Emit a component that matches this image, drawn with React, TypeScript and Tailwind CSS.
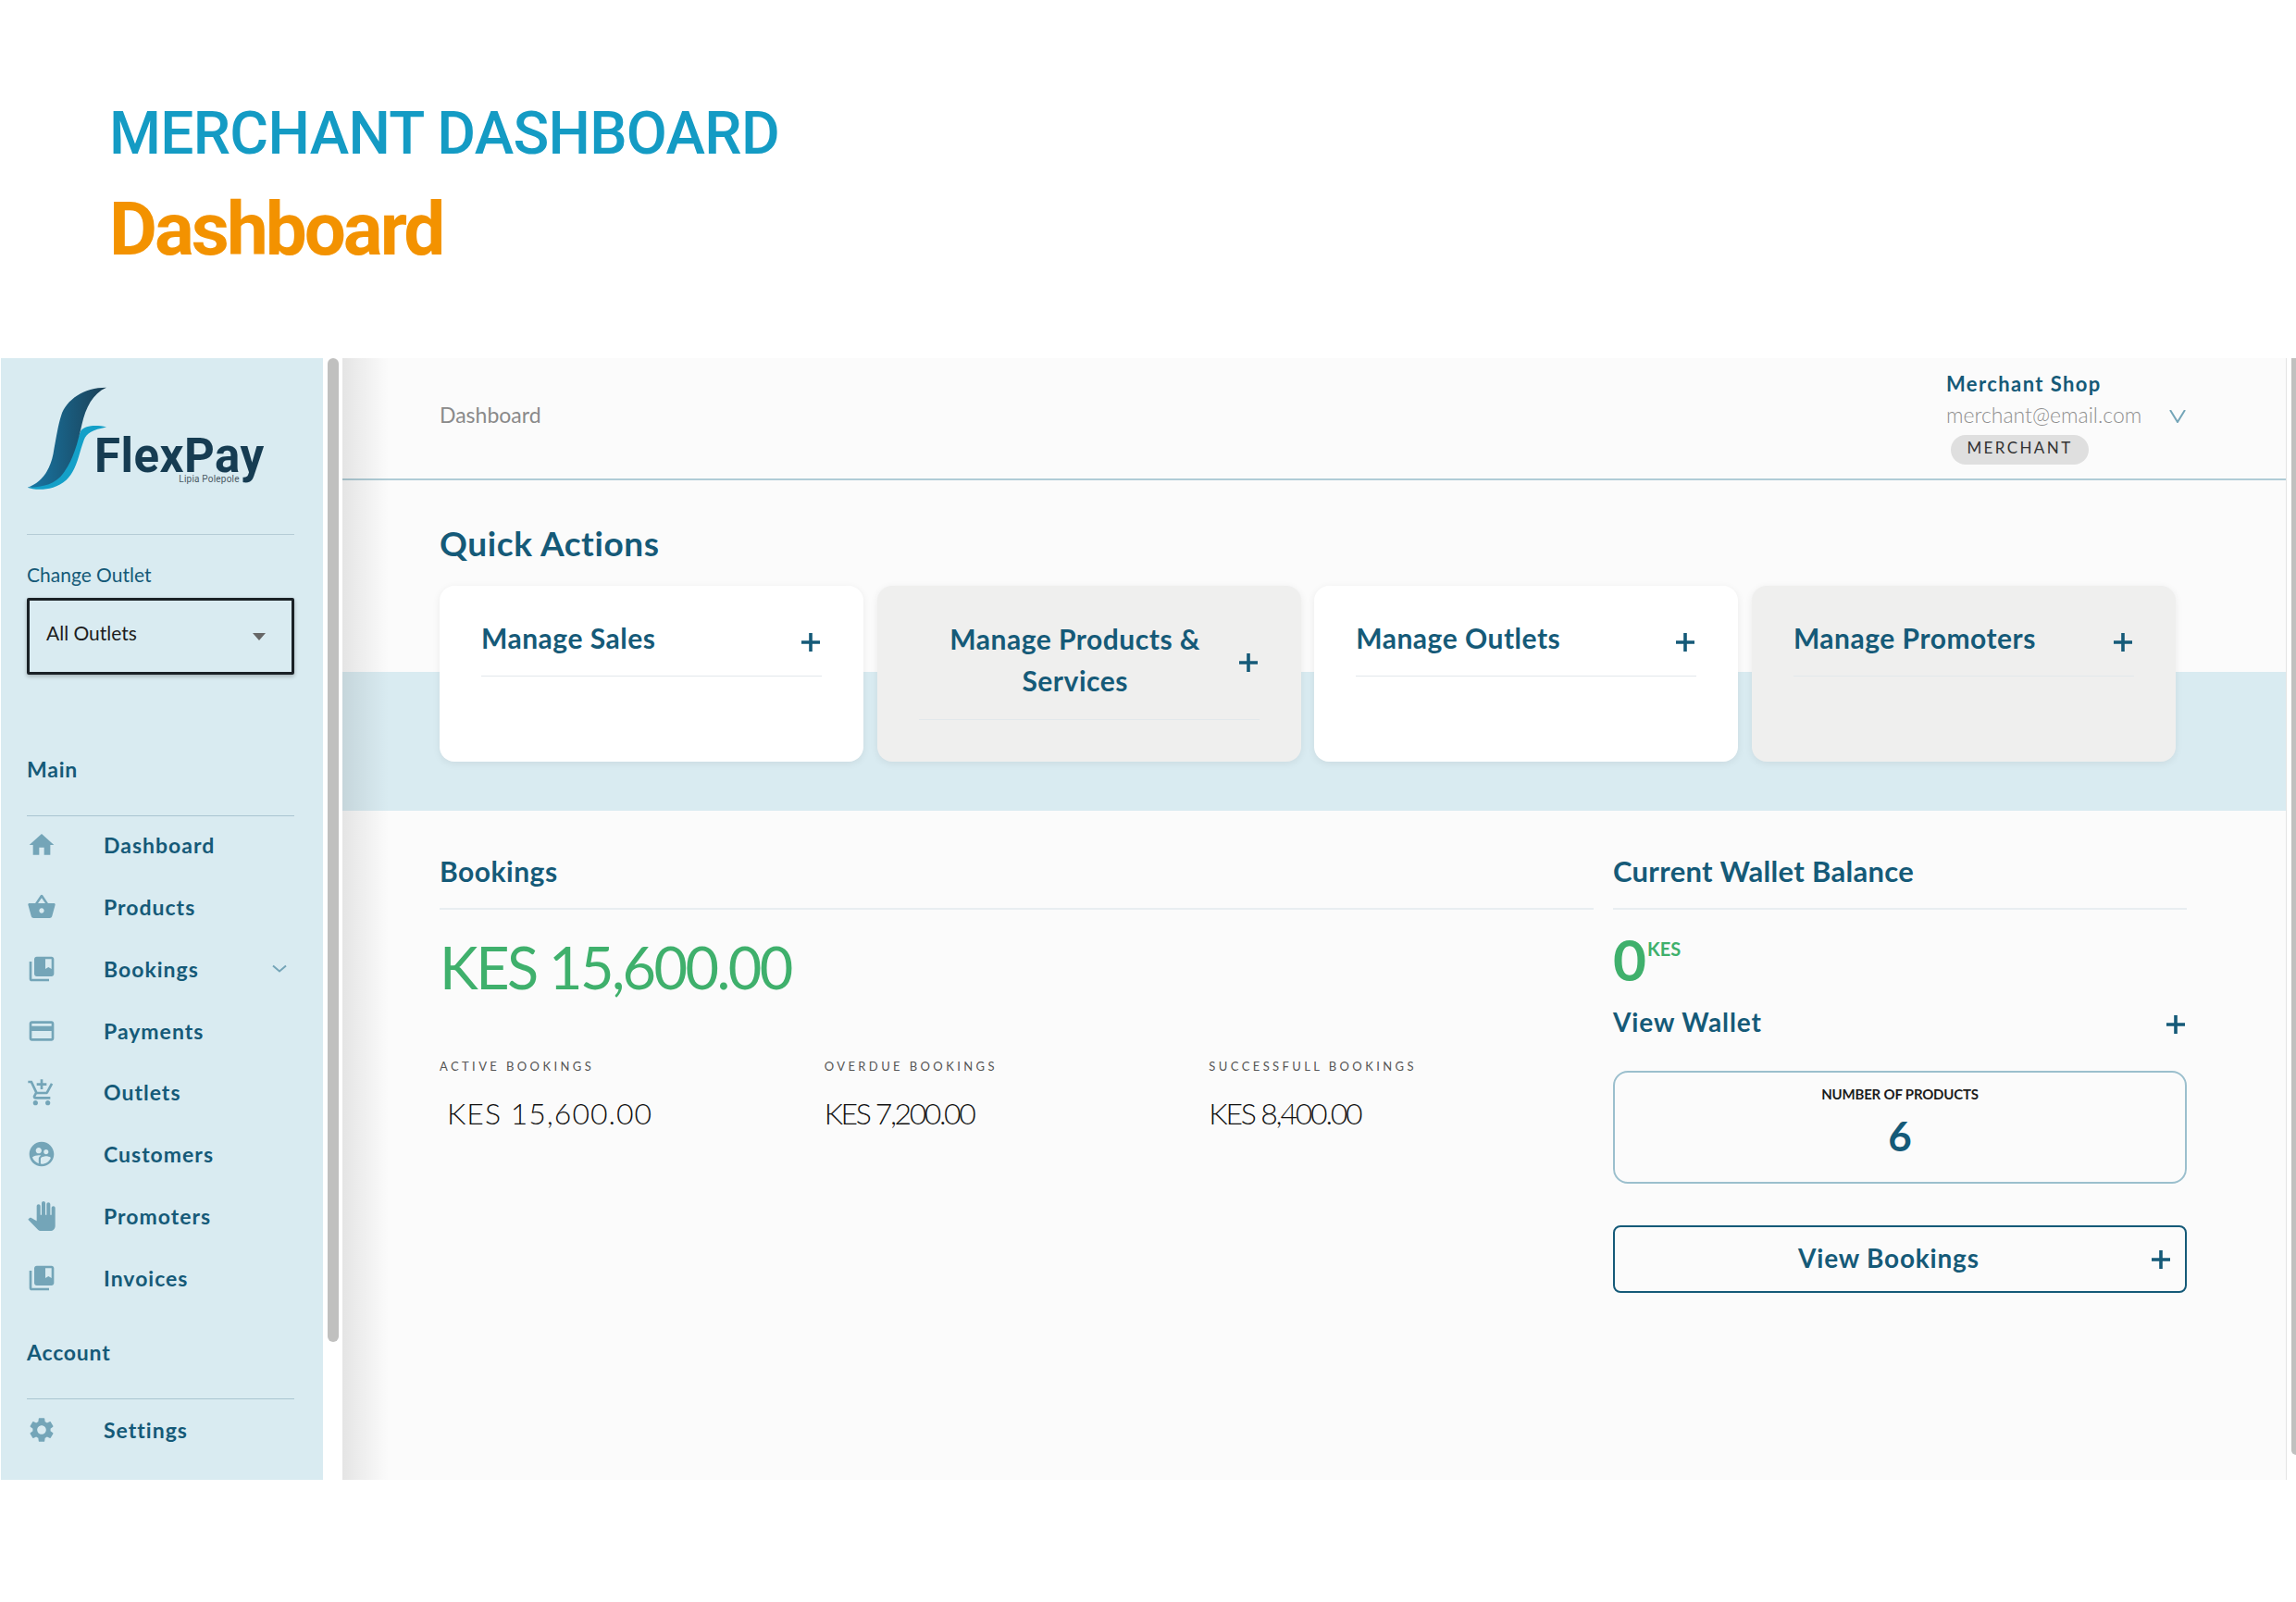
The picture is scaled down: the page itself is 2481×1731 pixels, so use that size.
const P: Record<string, string> = {
  home: "M10 20v-6h4v6h5v-8h3L12 3 2 12h3v8z",
  basket: "M17.21 9l-4.38-6.56c-.19-.28-.51-.42-.83-.42-.32 0-.64.14-.83.43L6.79 9H2c-.55 0-1 .45-1 1 0 .09.01.18.04.27l2.54 9.27c.23.84 1 1.46 1.92 1.46h13c.92 0 1.69-.62 1.93-1.46l2.54-9.27L23 10c0-.55-.45-1-1-1h-4.79zM9 9l3-4.4L15 9H9zm3 8c-1.1 0-2-.9-2-2s.9-2 2-2 2 .9 2 2-.9 2-2 2z",
  book: "M4 6H2v14c0 1.1.9 2 2 2h14v-2H4V6zm16-4H8c-1.1 0-2 .9-2 2v12c0 1.1.9 2 2 2h12c1.1 0 2-.9 2-2V4c0-1.1-.9-2-2-2zm0 10l-2.5-1.5L15 12V4h5v8z",
  card: "M20 4H4c-1.11 0-1.99.89-1.99 2L2 18c0 1.11.89 2 2 2h16c1.11 0 2-.89 2-2V6c0-1.11-.89-2-2-2zm0 14H4v-6h16v6zm0-10H4V6h16v2z",
  cart: "M11 9h2V6h3V4h-3V1h-2v3H8v2h3v3zm-4 9c-1.1 0-1.99.9-1.99 2S5.9 22 7 22s2-.9 2-2-.9-2-2-2zm10 0c-1.1 0-1.99.9-1.99 2s.89 2 1.99 2 2-.9 2-2-.9-2-2-2zm-9.83-3.25l.03-.12.9-1.63h7.45c.75 0 1.41-.41 1.75-1.03l3.86-7.01L19.42 4h-.01l-1.1 2-2.76 5H8.53l-.13-.27L6.16 6l-.95-2-.94-2H1v2h2l3.6 7.59-1.35 2.45c-.16.28-.25.61-.25.96 0 1.1.9 2 2 2h12v-2H7.42c-.13 0-.25-.11-.25-.25z",
  group: "M11.99 2c-5.52 0-10 4.48-10 10s4.48 10 10 10 10-4.48 10-10-4.48-10-10-10zm3.61 6.34c1.07 0 1.93.86 1.93 1.93 0 1.07-.86 1.93-1.93 1.93-1.07 0-1.93-.86-1.93-1.93-.01-1.07.86-1.93 1.93-1.93zm-6-1.58c1.3 0 2.36 1.06 2.36 2.36 0 1.3-1.06 2.36-2.36 2.36s-2.36-1.06-2.36-2.36c0-1.31 1.05-2.36 2.36-2.36zm0 9.13v3.75c-2.4-.75-4.3-2.6-5.14-4.96 1.05-1.12 3.67-1.69 5.14-1.69.53 0 1.2.08 1.9.22-1.64.87-1.9 2.02-1.9 2.68zM11.99 20c-.27 0-.53-.01-.79-.04v-4.07c0-1.42 2.94-2.13 4.4-2.13 1.07 0 2.92.39 3.84 1.15-1.17 2.97-4.06 5.09-7.45 5.09z",
  hand: "M23 5.5V20c0 2.2-1.8 4-4 4h-7.3c-1.08 0-2.1-.43-2.85-1.19L1 14.83s1.26-1.23 1.3-1.25c.22-.19.49-.29.79-.29.22 0 .42.06.6.16.04.01 4.31 2.46 4.31 2.46V4c0-.83.67-1.5 1.5-1.5S11 3.17 11 4v7h1V1.5c0-.83.67-1.5 1.5-1.5S15 .67 15 1.5V11h1V2.5c0-.83.67-1.5 1.5-1.5s1.5.67 1.5 1.5V11h1V5.5c0-.83.67-1.5 1.5-1.5s1.5.67 1.5 1.5z",
  gear: "M19.14 12.94c.04-.3.06-.61.06-.94 0-.32-.02-.64-.07-.94l2.03-1.58c.18-.14.23-.41.12-.61l-1.92-3.32c-.12-.22-.37-.29-.59-.22l-2.39.96c-.5-.38-1.03-.7-1.62-.94l-.36-2.54c-.04-.24-.24-.41-.48-.41h-3.84c-.24 0-.43.17-.47.41l-.36 2.54c-.59.24-1.13.57-1.62.94l-2.39-.96c-.22-.08-.47 0-.59.22L2.74 8.87c-.12.21-.08.47.12.61l2.03 1.58c-.05.3-.09.63-.09.94s.02.64.07.94l-2.03 1.58c-.18.14-.23.41-.12.61l1.92 3.32c.12.22.37.29.59.22l2.39-.96c.5.38 1.03.7 1.62.94l.36 2.54c.05.24.24.41.48.41h3.84c.24 0 .44-.17.47-.41l.36-2.54c.59-.24 1.13-.56 1.62-.94l2.39.96c.22.08.47 0 .59-.22l1.92-3.32c.12-.22.07-.47-.12-.61l-2.01-1.58zM12 15.6c-1.98 0-3.6-1.62-3.6-3.6s1.62-3.6 3.6-3.6 3.6 1.62 3.6 3.6-1.62 3.6-3.6 3.6z",
};

function Icon({ name }: { name: string }) {
  return (
    <svg viewBox="0 0 24 24" className="w-8 h-8 shrink-0 fill-[#74a5b8]">
      <path d={P[name]} />
    </svg>
  );
}

function Plus() {
  return (
    <svg viewBox="0 0 20 20" className="w-5 h-5 shrink-0 fill-[#155a78]">
      <path d="M8.2 0h3.6v8.2H20v3.6h-8.2V20H8.2v-8.2H0V8.2h8.2z" />
    </svg>
  );
}

function Logo() {
  return (
    <div className="flex h-[115px] -ml-[2px]">
      <svg viewBox="80 80 280 345" className="w-[93px] h-[115px] shrink-0">
        <defs>
          <linearGradient id="lg" x1="0" x2="1" y1="0" y2="0">
            <stop offset="0" stopColor="#1878a6" />
            <stop offset="1" stopColor="#1b3f55" />
          </linearGradient>
        </defs>
        <path d="M88 410C110 418 170 425 215 385C250 350 255 300 272 255C280 232 300 222 345 213C310 205 275 208 262 225C235 290 215 345 180 375C150 398 120 405 88 410Z" fill="#14a0c8" />
        <path d="M88 410C130 395 160 360 172 300C180 255 188 205 198 175C215 125 270 85 345 85C300 105 278 150 265 205C250 270 235 330 195 375C165 405 125 408 88 410Z" fill="url(#lg)" />
      </svg>
      <div className="-ml-[18px] flex flex-col items-end mt-[56px]">
        <div className="font-['Roboto',sans-serif] font-bold text-[51px] leading-[40px] tracking-[0.5px] text-[#163c52]">FlexPay</div>
        <div className="font-['Roboto',sans-serif] text-[10px] leading-[10px] tracking-[0.2px] text-[#4a5a64] mr-[27px]">Lipia Polepole</div>
      </div>
    </div>
  );
}

const nav = [
  ["home", "Dashboard"],
  ["basket", "Products"],
  ["book", "Bookings"],
  ["card", "Payments"],
  ["cart", "Outlets"],
  ["group", "Customers"],
  ["hand", "Promoters"],
  ["book", "Invoices"],
];

function NavRow({ icon, label, h }: { icon: string; label: string; h: string }) {
  return (
    <div className={`flex items-center ${h}`}>
      <Icon name={icon} />
      <span className="ml-[51px] text-[23px] font-bold tracking-[1px] text-[#155a78]">{label}</span>
      {label === "Bookings" && (
        <svg viewBox="0 0 16 10" className="w-4 h-[10px] ml-auto mr-[8px] fill-none stroke-[#74a5b8] stroke-2">
          <path d="M1 1.5l7 6 7-6" />
        </svg>
      )}
    </div>
  );
}

function Sidebar() {
  return (
    <aside className="w-[348px] ml-px h-[1212px] bg-[#d9ebf1] pl-[28px] pr-[31px] pt-[30px] overflow-hidden shrink-0">
      <Logo />
      <div className="mt-[45px] border-t border-[#b5ccd6]" />
      <div className="mt-[31px] text-[21px] leading-[24px] text-[#155a78]">Change Outlet</div>
      <div className="mt-[13px] h-[83px] border-[3px] border-[#1a2126] rounded-[2px] shadow-[0_2px_4px_rgba(0,0,0,.25)] flex pl-[18px] pr-[28px] pt-[22px] justify-between">
        <span className="text-[21px] leading-[26px] text-[#1d1d1d]">All Outlets</span>
        <svg viewBox="0 0 14 8" className="w-[14px] h-2 mt-[13px] fill-[#666]"><path d="M0 0h14L7 8z" /></svg>
      </div>
      <div className="mt-[88px] text-[23px] leading-[28px] font-bold tracking-[0.8px] text-[#155a78]">Main</div>
      <div className="mt-[36px] border-t border-[#a9c5d1]" />
      <div className="-mt-[2px]">
        {nav.map(([i, l]) => (
          <NavRow key={l} icon={i} label={l} h="h-[66.8px]" />
        ))}
      </div>
      <div className="mt-[33px] text-[23px] leading-[28px] font-bold tracking-[0.8px] text-[#155a78]">Account</div>
      <div className="mt-[36px] border-t border-[#a9c5d1]" />
      <NavRow icon="gear" label="Settings" h="h-[65px]" />
    </aside>
  );
}

function ActionCard({ title, gray, two }: { title: string; gray?: boolean; two?: boolean }) {
  return (
    <div className={`h-[190px] rounded-[16px] px-[45px] pt-[36px] shadow-[0_2px_8px_rgba(0,0,0,.07)] ${gray ? "bg-[#efefee]" : "bg-white"}`}>
      <div className={`flex items-center border-b border-[#e2e8eb] pb-[20px] ${two ? "h-[109px]" : "h-[62px]"}`}>
        <span className={`flex-1 text-[30px] leading-[45px] font-bold tracking-[0.5px] text-[#155a78] ${two ? "text-center" : ""}`}>{title}</span>
        <span className={two ? "mr-[2px] ml-[8px] mt-[5px]" : "mr-[2px] mt-[8px]"}><Plus /></span>
      </div>
    </div>
  );
}

function Main() {
  return (
    <main className="relative w-[2100px] ml-[4px] h-[1212px] bg-[#fbfbfb] border-r border-[#e3e3e3] box-content overflow-hidden shrink-0">
      <div className="absolute left-0 top-0 bottom-0 w-[50px] bg-gradient-to-r from-[rgba(0,0,0,.09)] to-transparent pointer-events-none" />
      <header className="h-[132px] border-b-2 border-[#b0ccd6] flex justify-between pl-[105px] pr-[108px]">
        <div className="pt-[47px] text-[23px] leading-[28px] text-[#8a8a8a]">Dashboard</div>
        <div className="w-[259px] pt-[14px]">
          <div className="text-[22px] leading-[28px] font-bold tracking-[1.4px] text-[#155a78]">Merchant Shop</div>
          <div className="mt-[5px] flex items-center justify-between">
            <span className="text-[23px] leading-[28px] font-light text-[#8f8f8f]">merchant@email.com</span>
            <svg viewBox="0 0 18 14" className="w-[18px] h-[14px] mt-[4px] fill-none stroke-[#74a5b8] stroke-2"><path d="M1 0l8 13 8-13" /></svg>
          </div>
          <div className="mt-[8px] ml-[5px] w-[149px] h-[32px] rounded-full bg-[#dfdfdf] flex items-center justify-center text-[17px] leading-[24px] tracking-[2.4px] text-[#333] pb-[4px]">MERCHANT</div>
        </div>
      </header>

      <section className="h-[357px] pl-[105px] pr-[119px] pt-[46px] bg-[linear-gradient(to_bottom,transparent_207px,#d9ebf1_207px)]">
        <h2 className="text-[37px] leading-[44px] font-bold tracking-[0.6px] text-[#155a78]">Quick Actions</h2>
        <div className="mt-[24px] grid grid-cols-4 gap-[14.5px]">
          <ActionCard title="Manage Sales" />
          <ActionCard title="Manage Products & Services" gray two />
          <ActionCard title="Manage Outlets" />
          <ActionCard title="Manage Promoters" gray />
        </div>
      </section>

      <section className="flex pl-[105px] gap-[21px]">
        <div className="w-[1247px]">
          <div className="pt-[44px] pb-[19px] border-b-2 border-[#e8eef1] text-[30px] leading-[42px] font-bold tracking-[0.5px] text-[#155a78]">Bookings</div>
          <div className="mt-[26px] text-[63px] leading-[72px] font-normal tracking-[-2.6px] text-[#3fb06c]">KES 15,600.00</div>
          <div className="mt-[61px] grid grid-cols-3">
            {[
              ["ACTIVE BOOKINGS", "KES 15,600.00", "pl-[8px] tracking-[1px]"],
              ["OVERDUE BOOKINGS", "KES 7,200.00", "tracking-[-2.4px]"],
              ["SUCCESSFULL BOOKINGS", "KES 8,400.00", "tracking-[-2.2px]"],
            ].map(([a, b, c]) => (
              <div key={a}>
                <div className="text-[13px] leading-[20px] tracking-[3.4px] text-[#555]">{a}</div>
                <div className={`mt-[21px] text-[32px] leading-[40px] font-light text-[#111] ${c}`}>{b}</div>
              </div>
            ))}
          </div>
        </div>
        <div className="w-[620px]">
          <div className="pt-[44px] pb-[19px] border-b-2 border-[#e8eef1] text-[31px] leading-[42px] font-bold tracking-[0.3px] text-[#155a78]">Current Wallet Balance</div>
          <div className="mt-[23px] h-[60px] flex items-start text-[#3fb06c]">
            <span className="text-[62px] leading-[60px] font-bold">0</span>
            <span className="text-[20px] leading-[24px] font-bold ml-[1px] mt-[7px]">KES</span>
          </div>
          <div className="mt-[20px] flex items-center justify-between text-[28px] leading-[36px] font-bold tracking-[0.9px] text-[#155a78]">
            <span>View Wallet</span>
            <span className="mr-[2px] mt-[6px]"><Plus /></span>
          </div>
          <div className="mt-[35px] h-[122px] border-2 border-[#9bbfcd] rounded-[16px] flex flex-col items-center pt-[12px]">
            <div className="text-[15px] leading-[22px] font-bold tracking-[-0.2px] text-[#1c1c1c]">NUMBER OF PRODUCTS</div>
            <div className="mt-[7px] text-[44px] leading-[54px] font-bold text-[#155a78]">6</div>
          </div>
          <div className="mt-[45px] h-[73px] border-2 border-[#155a78] rounded-[8px] flex items-center pl-[198px] pr-[16px] justify-between">
            <span className="text-[28px] font-bold tracking-[0.8px] text-[#155a78] -mt-[4px]">View Bookings</span>
            <Plus />
          </div>
        </div>
      </section>
    </main>
  );
}

export default function App() {
  return (
    <div className="w-[2481px] h-[1731px] bg-white overflow-hidden font-['Lato',sans-serif]">
      <div className="h-[387px] pl-[118px] pt-[107px]">
        <div className="font-['Roboto',sans-serif] font-medium text-[64px] leading-[76px] tracking-[-0.7px] text-[#149bc4]">MERCHANT DASHBOARD</div>
        <div className="mt-[21px] font-['Roboto',sans-serif] font-bold text-[80px] leading-[88px] tracking-[-3px] text-[#f39200]">Dashboard</div>
      </div>
      <div className="flex items-start">
        <Sidebar />
        <div className="ml-[5px] w-3 h-[1063px] rounded-[6px] bg-[#c0c0bf] shrink-0" />
        <Main />
        <div className="ml-[5px] w-[5px] h-[1185px] rounded-bl-[5px] bg-[#c0c0bf] shrink-0" />
      </div>
    </div>
  );
}
